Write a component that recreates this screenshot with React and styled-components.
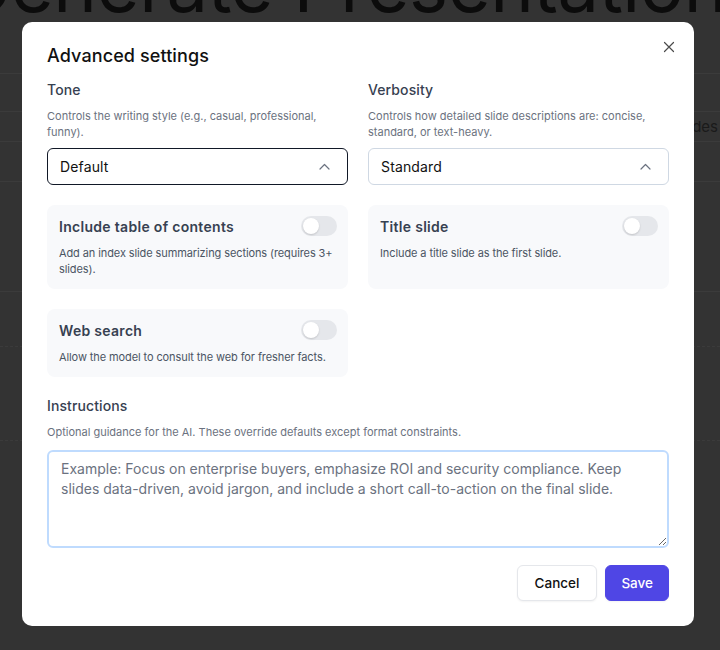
import React from "react";
import styled, { createGlobalStyle } from "styled-components";

const Global = createGlobalStyle`
  html, body { margin: 0; padding: 0; background: #333333; }
  body { font-family: Inter, "Noto Sans", sans-serif; }
  * { box-sizing: border-box; }
`;

const Page = styled.div`
  height: 650px;
  overflow: hidden;
  background: #333333;
`;

const BgHeading = styled.h1`
  margin: -52px 0 0 -44px;
  font-family: Inter, sans-serif;
  font-weight: 400;
  font-size: 74px;
  line-height: 74px;
  color: #0c0c0c;
  white-space: nowrap;
  letter-spacing: -0.5px;
`;

const BgRow = styled.div`
  height: ${(p) => p.$h}px;
  border-bottom: 1px ${(p) => (p.$dashed ? "dashed" : "solid")} #3b3b3b;
  display: flex;
  align-items: center;
  justify-content: flex-end;
  color: #1a1a1a;
  font-size: 15px;
  padding-right: 2px;
`;

const Overlay = styled.div`
  position: fixed;
  inset: 0;
  display: flex;
  align-items: flex-start;
  justify-content: center;
  padding: 22px 4px 0 0;
`;

const Modal = styled.div`
  position: relative;
  width: 672px;
  height: 604px;
  background: #ffffff;
  border-radius: 10px;
  padding: 22px 25px 25px;
  display: flex;
  flex-direction: column;
`;

const Title = styled.h2`
  margin: 0;
  font-size: 18px;
  line-height: 24px;
  font-weight: 500;
  color: #111111;
  letter-spacing: 0.1px;
`;

const Close = styled.button`
  position: absolute;
  top: 19px;
  right: 19px;
  width: 12px;
  height: 12px;
  padding: 0;
  border: 0;
  background: none;
  display: flex;
  cursor: pointer;
`;

const Grid = styled.div`
  display: grid;
  grid-template-columns: 1fr 1fr;
  column-gap: 20px;
  row-gap: 20px;
  margin-top: 12px;
  align-items: start;
`;

const Field = styled.div`
  display: flex;
  flex-direction: column;
`;

const Label = styled.div`
  font-size: 14px;
  line-height: 20px;
  font-weight: 500;
  color: #374151;
  letter-spacing: 0.1px;
`;

const Help = styled.div`
  margin-top: 9px;
  font-size: 11px;
  line-height: 15.5px;
  color: #6b7280;
  min-height: ${(p) => p.$min || 0}px;
`;

const Select = styled.div`
  margin-top: 8px;
  height: 37px;
  border-radius: 6px;
  border: ${(p) => (p.$focused ? "1.5px solid #111827" : "1px solid #cfd8e3")};
  display: flex;
  align-items: center;
  justify-content: space-between;
  padding: 0 17px 0 12px;
  font-size: 14px;
  letter-spacing: 0.15px;
  color: #111111;
  background: #fff;
`;

const Card = styled.div`
  background: #f8f9fb;
  border-radius: 8px;
  padding: 10px 11px 12px 12px;
  min-height: ${(p) => p.$h}px;
`;

const CardHead = styled.div`
  display: flex;
  align-items: center;
  justify-content: space-between;
  height: 22px;
`;

const CardTitle = styled.div`
  font-size: 14px;
  font-weight: 600;
  color: #374151;
  letter-spacing: 0.3px;
`;

const Toggle = styled.div`
  width: 36px;
  height: 20px;
  border-radius: 10px;
  background: #e5e7eb;
  padding: 2px;
  display: flex;
`;

const Knob = styled.div`
  width: 16px;
  height: 16px;
  border-radius: 50%;
  background: #ffffff;
  box-shadow: 0 1px 2px rgba(0, 0, 0, 0.15);
`;

const CardText = styled.div`
  margin-top: 8px;
  font-size: 11px;
  line-height: 16px;
  color: #4b5563;
  letter-spacing: -0.1px;
`;

const Instructions = styled.div`
  margin-top: 19px;
  display: flex;
  flex-direction: column;
`;

const TextArea = styled.textarea`
  margin-top: 9px;
  height: 98px;
  resize: vertical;
  border: 2px solid #bfdbfe;
  border-radius: 6px;
  padding: 7px 12px;
  font-family: inherit;
  font-size: 14px;
  line-height: 20px;
  color: #111;
  outline: none;
  &::placeholder { color: #6b7280; }
`;

const Footer = styled.div`
  margin-top: 17px;
  display: flex;
  justify-content: flex-end;
  gap: 8px;
`;

const Button = styled.button`
  height: 36px;
  padding: 0 ${(p) => (p.$primary ? "15px" : "17px")};
  border-radius: 6px;
  font-family: inherit;
  font-size: 13.5px;
  font-weight: 500;
  border: 1px solid ${(p) => (p.$primary ? "#4f46e5" : "#e5e7eb")};
  background: ${(p) => (p.$primary ? "#4f46e5" : "#ffffff")};
  color: ${(p) => (p.$primary ? "#ffffff" : "#111111")};
  box-shadow: 0 1px 2px rgba(0, 0, 0, 0.05);
`;

const Chevron = () => (
  <svg width="11" height="7" viewBox="0 0 11 7" fill="none">
    <path d="M1 6L5.5 1.5L10 6" stroke="#6b7280" strokeWidth="1.2" strokeLinecap="round" strokeLinejoin="round" />
  </svg>
);

const ToggleCard = ({ title, text, h }) => (
  <Card $h={h}>
    <CardHead>
      <CardTitle>{title}</CardTitle>
      <Toggle>
        <Knob />
      </Toggle>
    </CardHead>
    <CardText>{text}</CardText>
  </Card>
);

export default function App() {
  return (
    <>
      <Global />
      <Page>
        <BgHeading>Generate Presentation</BgHeading>
        <BgRow $h={52} />
        <BgRow $h={38} />
        <BgRow $h={30}>des</BgRow>
        <BgRow $h={40} />
        <BgRow $h={110} />
        <BgRow $h={55} $dashed />
        <BgRow $h={94} $dashed />
      </Page>
      <Overlay>
        <Modal>
          <Title>Advanced settings</Title>
          <Close aria-label="Close">
            <svg width="12" height="12" viewBox="0 0 12 12">
              <path d="M1.5 1.5L10.5 10.5M10.5 1.5L1.5 10.5" stroke="#4b4b4b" strokeWidth="1.2" strokeLinecap="round" />
            </svg>
          </Close>
          <Grid>
            <Field>
              <Label>Tone</Label>
              <Help $min={31}>Controls the writing style (e.g., casual, professional, funny).</Help>
              <Select $focused>
                <span>Default</span>
                <Chevron />
              </Select>
            </Field>
            <Field>
              <Label>Verbosity</Label>
              <Help $min={31}>Controls how detailed slide descriptions are: concise, standard, or text-heavy.</Help>
              <Select>
                <span>Standard</span>
                <Chevron />
              </Select>
            </Field>
            <ToggleCard
              h={84}
              title="Include table of contents"
              text="Add an index slide summarizing sections (requires 3+ slides)."
            />
            <ToggleCard h={84} title="Title slide" text="Include a title slide as the first slide." />
            <ToggleCard h={68} title="Web search" text="Allow the model to consult the web for fresher facts." />
          </Grid>
          <Instructions>
            <Label>Instructions</Label>
            <Help>Optional guidance for the AI. These override defaults except format constraints.</Help>
            <TextArea placeholder="Example: Focus on enterprise buyers, emphasize ROI and security compliance. Keep slides data-driven, avoid jargon, and include a short call-to-action on the final slide." />
          </Instructions>
          <Footer>
            <Button>Cancel</Button>
            <Button $primary>Save</Button>
          </Footer>
        </Modal>
      </Overlay>
    </>
  );
}
